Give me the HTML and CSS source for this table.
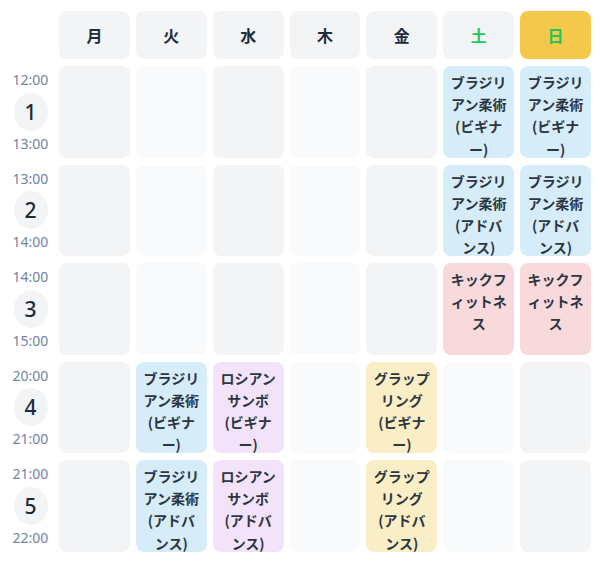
FILE: index.html
```html
<!DOCTYPE html>
<html lang="ja">
<head>
<meta charset="utf-8">
<title>時間割</title>
<link rel="stylesheet" href="styles.css">
</head>
<body>
<div class="timetable">
  <div class="corner"></div>
  <div class="day">月</div>
  <div class="day">火</div>
  <div class="day">水</div>
  <div class="day">木</div>
  <div class="day">金</div>
  <div class="day sat">土</div>
  <div class="day sun">日</div>

  <div class="period"><span class="t">12:00</span><span class="num">1</span><span class="t">13:00</span></div>
  <div class="cell dark"></div>
  <div class="cell light"></div>
  <div class="cell dark"></div>
  <div class="cell light"></div>
  <div class="cell dark"></div>
  <div class="cell ev blue">ブラジリアン柔術(ビギナー)</div>
  <div class="cell ev blue">ブラジリアン柔術(ビギナー)</div>

  <div class="period"><span class="t">13:00</span><span class="num">2</span><span class="t">14:00</span></div>
  <div class="cell dark"></div>
  <div class="cell light"></div>
  <div class="cell dark"></div>
  <div class="cell light"></div>
  <div class="cell dark"></div>
  <div class="cell ev blue">ブラジリアン柔術(アドバンス)</div>
  <div class="cell ev blue">ブラジリアン柔術(アドバンス)</div>

  <div class="period"><span class="t">14:00</span><span class="num">3</span><span class="t">15:00</span></div>
  <div class="cell dark"></div>
  <div class="cell light"></div>
  <div class="cell dark"></div>
  <div class="cell light"></div>
  <div class="cell dark"></div>
  <div class="cell ev pink">キックフィットネス</div>
  <div class="cell ev pink">キックフィットネス</div>

  <div class="period"><span class="t">20:00</span><span class="num">4</span><span class="t">21:00</span></div>
  <div class="cell dark"></div>
  <div class="cell ev blue">ブラジリアン柔術(ビギナー)</div>
  <div class="cell ev purple">ロシアンサンボ(ビギナー)</div>
  <div class="cell light"></div>
  <div class="cell ev yellow">グラップリング(ビギナー)</div>
  <div class="cell light"></div>
  <div class="cell dark"></div>

  <div class="period"><span class="t">21:00</span><span class="num">5</span><span class="t">22:00</span></div>
  <div class="cell dark"></div>
  <div class="cell ev blue">ブラジリアン柔術(アドバンス)</div>
  <div class="cell ev purple">ロシアンサンボ(アドバンス)</div>
  <div class="cell light"></div>
  <div class="cell ev yellow">グラップリング(アドバンス)</div>
  <div class="cell light"></div>
  <div class="cell dark"></div>
</div>
</body>
</html>
```
FILE: styles.css
```css
html, body {
  margin: 0;
  padding: 0;
  background: #ffffff;
}
body {
  font-family: "Noto Sans", "Noto Sans CJK JP", sans-serif;
  color: #1f2d3d;
}
.timetable {
  display: grid;
  grid-template-columns: 45px repeat(7, 1fr);
  grid-template-rows: 48px repeat(5, 91.5px);
  column-gap: 6px;
  row-gap: 7px;
  padding: 11px 9px 0 8px;
}
.day {
  display: flex;
  align-items: center;
  justify-content: center;
  background: #f3f4f6;
  border-radius: 8px;
  font-family: "Noto Sans CJK JP", sans-serif;
  font-weight: 700;
  font-size: 16px;
  color: #1f2d3d;
}
.day.sat {
  color: #22c55e;
}
.day.sun {
  background: #f3c84b;
  color: #22c55e;
}
.period {
  display: flex;
  flex-direction: column;
  align-items: center;
  justify-content: space-between;
  padding: 5px 0 5px;
}
.t {
  font-size: 14px;
  line-height: 18px;
  color: #7284a3;
}
.num {
  display: flex;
  align-items: center;
  justify-content: center;
  width: 34px;
  height: 38px;
  border-radius: 50%;
  background: #f3f4f6;
  font-size: 21px;
  font-weight: 500;
  color: #1c2b3a;
}
.cell {
  border-radius: 8px;
  min-width: 0;
}
.cell.dark {
  background: #f3f4f6;
}
.cell.light {
  background: #f9fafb;
}
.ev {
  padding: 5px 6px 0;
  font-family: "Noto Sans CJK JP", sans-serif;
  font-weight: 700;
  font-size: 14px;
  line-height: 22.2px;
  text-align: center;
  color: #2b3642;
}
.ev.blue {
  background: #d6ecf8;
}
.ev.pink {
  background: #f8dadd;
}
.ev.purple {
  background: #f3e3fa;
}
.ev.yellow {
  background: #faeec6;
}
```
